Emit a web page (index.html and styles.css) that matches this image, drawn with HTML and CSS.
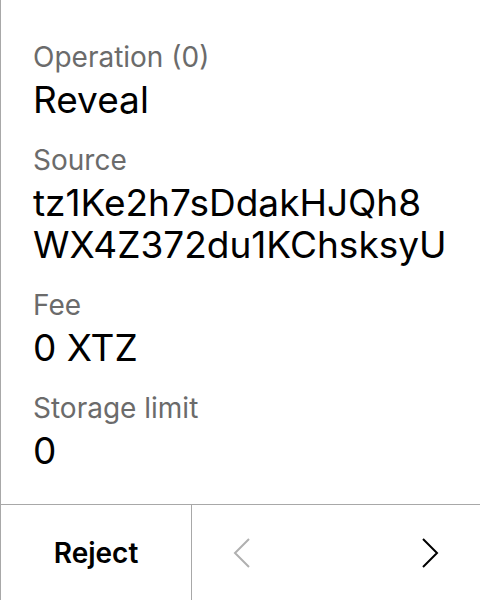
FILE: index.html
```html
<!DOCTYPE html>
<html>
<head>
<meta charset="utf-8">
<link rel="stylesheet" href="styles.css">
</head>
<body>
<div class="screen">
  <div class="content">
    <div class="item">
      <div class="label">Operation (0)</div>
      <div class="value">Reveal</div>
    </div>
    <div class="item">
      <div class="label">Source</div>
      <div class="value">tz1Ke2h7sDdakHJQh8<br>WX4Z372du1KChsksyU</div>
    </div>
    <div class="item">
      <div class="label">Fee</div>
      <div class="value">0 XTZ</div>
    </div>
    <div class="item">
      <div class="label">Storage limit</div>
      <div class="value">0</div>
    </div>
  </div>
  <div class="footer">
    <div class="reject">Reject</div>
    <div class="nav">
      <div class="navbtn prev">
        <svg width="18" height="30" viewBox="0 0 18 30"><polyline points="16,1 2,15 16,29" fill="none" stroke="#b0b0b0" stroke-width="2"/></svg>
      </div>
      <div class="navbtn next">
        <svg width="18" height="30" viewBox="0 0 18 30"><polyline points="2,1 16,15 2,29" fill="none" stroke="#000" stroke-width="2"/></svg>
      </div>
    </div>
  </div>
</div>
</body>
</html>
```
FILE: styles.css
```css
* { box-sizing: border-box; }
html, body { margin: 0; padding: 0; background: #fff; }
body { font-family: Inter, "Noto Sans", sans-serif; color: #000; }
.screen {
  width: 480px;
  height: 600px;
  display: flex;
  flex-direction: column;
  border-left: 1px solid #a8a8a8;
}
.content {
  flex: 1;
  padding: 39px 20px 0 32px;
  display: flex;
  flex-direction: column;
  gap: 21px;
}
.item { display: flex; flex-direction: column; gap: 4px; }
.label {
  font-size: 28px;
  line-height: 36px;
  color: #6b6b6b;
}
.value {
  font-size: 37px;
  line-height: 42px;
  color: #000;
  white-space: nowrap;
}
.footer {
  height: 96px;
  border-top: 1px solid #a8a8a8;
  display: flex;
}
.reject {
  width: 191px;
  border-right: 1px solid #a8a8a8;
  display: flex;
  align-items: center;
  justify-content: center;
  font-size: 28px;
  font-weight: 600;
}
.nav {
  flex: 1;
  display: flex;
  justify-content: space-between;
}
.navbtn {
  width: 100px;
  display: flex;
  align-items: center;
  justify-content: center;
}
```
